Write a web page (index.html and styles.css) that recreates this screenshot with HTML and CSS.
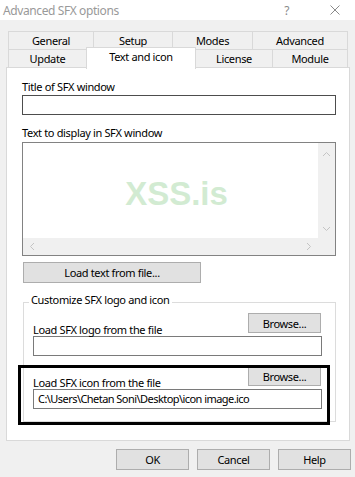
FILE: index.html
```html
<!DOCTYPE html>
<html lang="en">
  <head>
    <meta charset="UTF-8" />
    <title>Advanced SFX options</title>
    <link rel="stylesheet" href="styles.css">
  </head>
  <body>
    <div class="titlebar">
      <span class="title">Advanced SFX options</span>
      <span class="tb-help">?</span>
      <svg class="tb-close" width="10" height="10" viewBox="0 0 10 10">
        <path d="M0.5 0.5 L9.5 9.5 M9.5 0.5 L0.5 9.5" stroke="#8a8a8a" stroke-width="1" fill="none" />
      </svg>
    </div>

    <div class="tabs">
      <div class="tab-row">
        <div class="tab tab-general">General</div>
        <div class="tab tab-setup">Setup</div>
        <div class="tab tab-modes">Modes</div>
        <div class="tab tab-advanced last">Advanced</div>
      </div>
      <div class="tab-row">
        <div class="tab tab-update">Update</div>
        <div class="tab tab-text active">Text and icon</div>
        <div class="tab tab-license">License</div>
        <div class="tab tab-module last">Module</div>
      </div>
    </div>

    <div class="panel">
      <div class="label first">Title of SFX window</div>
      <div class="input dark"></div>

      <div class="label second">Text to display in SFX window</div>
      <div class="textarea">
        <div class="text-area-body">
          <span class="watermark">XSS.is</span>
        </div>
        <div class="vscroll">
          <svg width="9" height="6" viewBox="0 0 9 6"><path d="M1 5 L4.5 1.5 L8 5" stroke="#c4c4c4" fill="none" /></svg>
          <svg width="9" height="6" viewBox="0 0 9 6"><path d="M1 1 L4.5 4.5 L8 1" stroke="#c4c4c4" fill="none" /></svg>
        </div>
        <div class="hscroll">
          <svg width="6" height="9" viewBox="0 0 6 9"><path d="M5 1 L1.5 4.5 L5 8" stroke="#c4c4c4" fill="none" /></svg>
          <svg width="6" height="9" viewBox="0 0 6 9"><path d="M1 1 L4.5 4.5 L1 8" stroke="#c4c4c4" fill="none" /></svg>
        </div>
        <div class="corner"></div>
      </div>

      <button class="btn load-text">Load text from file...</button>

      <fieldset class="group">
        <legend>Customize SFX logo and icon</legend>
        <div class="file-row">
          <span class="file-label">Load SFX logo from the file</span>
          <button class="btn browse">Browse...</button>
        </div>
        <div class="input"></div>

        <div class="file-row second-row">
          <span class="file-label">Load SFX icon from the file</span>
          <button class="btn browse">Browse...</button>
        </div>
        <div class="input icon-path">C:\Users\Chetan Soni\Desktop\icon image.ico</div>
      </fieldset>

      <div class="highlight"></div>
    </div>

    <div class="footer">
      <button class="btn action">OK</button>
      <button class="btn action">Cancel</button>
      <button class="btn action">Help</button>
    </div>
  </body>
</html>
```

FILE: styles.css
```css
body {
  margin: 0;
  padding: 0;
  width: 355px;
  height: 477px;
  overflow: hidden;
  background-color: #f0f0f0;
  font-family: "Noto Sans", "Open Sans", sans-serif;
  font-size: 11px;
  letter-spacing: -0.35px;
  color: #000;
}

.titlebar {
  height: 20px;
  background-color: #fff;
  display: flex;
  align-items: center;
  color: #999;
}
.titlebar .title {
  margin-left: 3px;
  font-size: 12px;
  letter-spacing: -0.4px;
  flex: 1;
}
.tb-help {
  font-size: 12px;
  color: #8a8a8a;
  margin-right: 41px;
}
.tb-close {
  margin-right: 15px;
}

/* tabs */
.tabs {
  margin: 11px 0 0 8px;
  width: 340px;
}
.tab-row {
  display: flex;
  height: 18px;
}
.tab {
  box-sizing: border-box;
  height: 19px;
  border: 1px solid #d9d9d9;
  border-right: none;
  text-align: center;
  line-height: 17px;
  background-color: #f0f0f0;
}
.tab.last {
  border-right: 1px solid #d9d9d9;
}
.tab-general { width: 85px; }
.tab-setup { width: 79px; }
.tab-modes { width: 80px; }
.tab-advanced { width: 96px; }
.tab-update { width: 78px; }
.tab-text { width: 110px; }
.tab-license { width: 76px; }
.tab-module { width: 76px; }

.tab.active {
  position: relative;
  z-index: 2;
  background-color: #fff;
  height: 22px;
  margin-top: -2px;
  border-bottom: none;
  border-right: 1px solid #d9d9d9;
  line-height: 18px;
}
.tab.active + .tab {
  border-left: none;
}

/* page panel */
.panel {
  position: relative;
  box-sizing: border-box;
  width: 344px;
  height: 374px;
  margin: 0 0 0 6px;
  background-color: #fff;
  border: 1px solid #d9d9d9;
  padding: 11px 13px 0 15px;
}

.label {
  line-height: 15px;
}
.label.first {
  margin-bottom: 1px;
}
.label.second {
  margin-top: 10px;
  margin-bottom: 2px;
}

.input {
  box-sizing: border-box;
  height: 20px;
  border: 1px solid #7a7a7a;
  background-color: #fff;
  line-height: 17px;
  padding-left: 4px;
}
.input.dark {
  border-color: #4d4d4d;
}

.textarea {
  box-sizing: border-box;
  height: 114px;
  border: 1px solid #828282;
  display: grid;
  grid-template-columns: 1fr 17px;
  grid-template-rows: 1fr 17px;
}
.text-area-body {
  display: flex;
  align-items: center;
  justify-content: center;
  padding: 6px 0 0 12px;
}
.watermark {
  font-family: "Liberation Sans", Arial, sans-serif;
  font-weight: bold;
  font-size: 33px;
  letter-spacing: 0;
  color: #d2ebd2;
}
.vscroll {
  background-color: #f0f0f0;
  display: flex;
  flex-direction: column;
  justify-content: space-between;
  align-items: center;
  padding: 8px 0 6px;
}
.hscroll {
  background-color: #f0f0f0;
  display: flex;
  justify-content: space-between;
  align-items: center;
  padding: 0 6px 0 6px;
}
.corner {
  background-color: #f0f0f0;
}

.btn {
  box-sizing: border-box;
  font-family: inherit;
  font-size: 11px;
  letter-spacing: -0.35px;
  color: #000;
  background-color: #e1e1e1;
  border: 1px solid #adadad;
  padding: 0;
  margin: 0;
  display: block;
}
.load-text {
  margin: 6px 0 0 1px;
  width: 178px;
  height: 21px;
}

/* customize group */
.group {
  margin: 9px 0 0 1px;
  border: 1px solid #dcdcdc;
  padding: 0 13px 12px 9px;
  min-width: 0;
}
.group legend {
  padding: 0 2px 6px;
  margin-left: -4px;
  line-height: 15px;
}
.file-row {
  display: flex;
  justify-content: space-between;
  height: 23px;
}
.file-row.second-row {
  margin-top: 10px;
}
.file-label {
  align-self: flex-end;
  line-height: 15px;
  margin-bottom: -1px;
}
.browse {
  width: 73px;
  height: 20px;
  margin-right: 1px;
}
.icon-path {
  line-height: 17px;
  letter-spacing: -0.55px;
}

.highlight {
  position: absolute;
  left: 11px;
  top: 297px;
  width: 312px;
  height: 60px;
  box-sizing: border-box;
  border: 3px solid #000;
}

.footer {
  display: flex;
  justify-content: flex-end;
  gap: 8px;
  margin: 8px 4px 0 0;
}
.action {
  width: 73px;
  height: 21px;
}
```
